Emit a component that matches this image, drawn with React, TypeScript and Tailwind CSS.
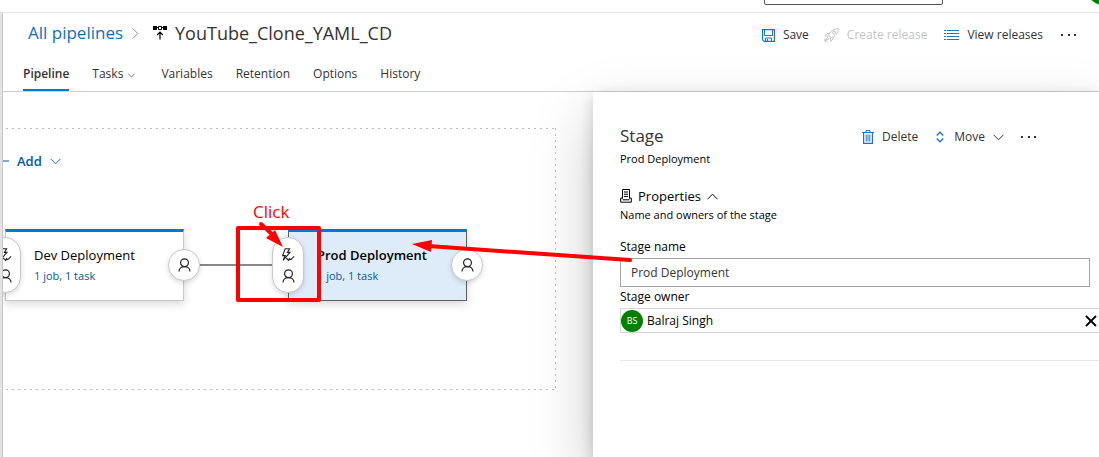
import type { ReactNode, SVGProps } from "react";

function Icon({ children, ...rest }: { children: ReactNode } & SVGProps<SVGSVGElement>) {
  return (
    <svg fill="none" stroke="currentColor" aria-hidden="true" {...rest}>
      {children}
    </svg>
  );
}

const Person = () => (
  <Icon width="13" height="14" viewBox="0 0 13 14" strokeWidth="1.2">
    <circle cx="6.5" cy="4.7" r="3.9" />
    <path d="M1 13.5C1 10.5 3.4 8.6 6.5 8.6S12 10.5 12 13.5" />
  </Icon>
);

const BoltCheck = () => (
  <Icon width="14" height="14" viewBox="0 0 14 14" strokeWidth="1.1">
    <path d="M4.2.8H8.6L6.4 4.4H9L2 12.4 4.2 7.6H1.6Z" />
    <path d="M5.2 10 7.6 12.4 9.2 10.6M8 10.2 9.8 11.6 13.2 8.4" />
  </Icon>
);

const Chevron = ({ className }: { className?: string }) => (
  <Icon width="11" height="7" viewBox="0 0 11 7" className={className}>
    <path d="M.5.8 5.5 5.8 10.5.8" />
  </Icon>
);

const Dots = () => (
  <Icon width="16" height="4" viewBox="0 0 16 4" stroke="none" fill="currentColor">
    <rect x="0" y="1" width="2" height="2" />
    <rect x="7" y="1" width="2" height="2" />
    <rect x="13" y="1" width="2" height="2" />
  </Icon>
);

const ReleaseIcon = () => (
  <Icon width="14" height="14" viewBox="0 0 14 14" className="text-black">
    <path d="M0 0H4V4H0ZM10 0H14V4H10Z" fill="currentColor" stroke="none" />
    <path d="M5.5.5H8.5V3.5H5.5ZM4 1.5H5M9 1.5H10" />
    <path d="M7 13.5V6.5M4.2 9 7 6.2 9.8 9" strokeWidth="1.2" />
  </Icon>
);

const SaveIcon = () => (
  <Icon width="13" height="13" viewBox="0 0 13 13" className="text-[#1874cd]">
    <path d="M.6.6H12.4V12.4H2.2L.6 10.8Z" strokeWidth="1.2" />
    <path d="M2.5.5V6.5H10.5V.5M3.5 12.4V9H9.5V12.4M5.5 10V12" />
  </Icon>
);

const RocketIcon = () => (
  <Icon width="15" height="14" viewBox="0 0 15 14">
    <path d="M4.5 7.2C6 3.5 9.5.8 14.3.6 14.2 5 11.2 8.3 7.3 9.8Z" />
    <circle cx="10" cy="4.6" r="1.4" />
    <path d="M5.3 5.5H3L.8 8H4.3M9 9.2V11L6.5 13.3V9.8M4.2 8.6 1 12.9 5.5 10.3M1 10.5V13.3H3.5" />
  </Icon>
);

const ListIcon = () => (
  <Icon width="15" height="12" viewBox="0 0 15 12" className="text-[#1874cd]">
    <path d="M3 1.5H15M3 4.5H15M3 7.5H15M3 10.5H15M0 1.5H2M0 4.5H2M0 7.5H2M0 10.5H2" />
  </Icon>
);

const TrashIcon = () => (
  <Icon width="12" height="14" viewBox="0 0 12 14" className="text-[#1874cd]">
    <path d="M0 2.5H12M4 2.5V.6H8V2.5" />
    <path d="M1.6 2.5V13.4H10.4V2.5" strokeWidth="1.2" />
    <path d="M4.2 4.5V11.5M6 4.5V11.5M7.8 4.5V11.5" />
  </Icon>
);

const MoveIcon = () => (
  <Icon width="8" height="12" viewBox="0 0 8 12" strokeWidth="1.3" className="text-[#1874cd]">
    <path d="M.7 4.5 4 1.2 7.3 4.5M.7 7.5 4 10.8 7.3 7.5" />
  </Icon>
);

const PropertiesIcon = () => (
  <Icon width="12" height="14" viewBox="0 0 12 14">
    <path d="M2.5 9.5V.5H9.5V9.5M4 3H8M4 5.2H8M4 7.4H8" />
    <path d="M2.6 9H.7V13.2H11.3V9H9.4M2.6 10.8H9.4" />
  </Icon>
);

function Stage({ name, place, selected }: { name: string; place: string; selected?: boolean }) {
  return (
    <div
      className={`absolute top-[137px] h-[72px] w-[179px] border border-t-[3px] border-t-[#0078d4] shadow-[0_3px_8px_rgba(0,0,0,0.16)] ${place} ${
        selected ? "border-[#605e5c] bg-[#deecf9]" : "border-[#c8c8c8] bg-white"
      }`}
    >
      <div className="pt-[13px] pl-7">
        <div className={`text-[13px] leading-5 text-black ${selected ? "font-semibold" : ""}`}>{name}</div>
        <a href="#tasks" className="block text-[11px] leading-[22px] text-[#005a9e]">
          1 job, 1 task
        </a>
      </div>
      <button
        aria-label="Pre-deployment conditions"
        className="absolute top-[5px] -left-[17px] flex h-14 w-8 flex-col items-center justify-center gap-[7px] rounded-full border border-[#c8c8c8] bg-white text-[#222] shadow-[0_2px_5px_rgba(0,0,0,0.15)]"
      >
        <BoltCheck />
        <Person />
      </button>
      <button
        aria-label="Post-deployment conditions"
        className="absolute top-[17px] -right-[17px] flex size-8 items-center justify-center rounded-full border border-[#c8c8c8] bg-white text-[#222] shadow-[0_2px_5px_rgba(0,0,0,0.15)]"
      >
        <Person />
      </button>
    </div>
  );
}

function Annotations() {
  return (
    <div className="pointer-events-none absolute top-0 left-0 text-[#ff0000]">
      <svg width="660" height="320" viewBox="0 0 660 320" fill="none" stroke="currentColor" strokeWidth="4">
        <rect x="238" y="228" width="81" height="72" strokeLinejoin="round" />
        <path d="M261 224 273 235" strokeLinecap="round" />
        <path d="M283 247 266 238 275 230Z" fill="currentColor" stroke="none" />
        <path d="M630 260 428 246" strokeLinecap="round" />
        <path d="M412 244 432 240 431 252Z" fill="currentColor" stroke="none" />
      </svg>
      <span className="absolute top-[200px] left-[253px] text-[17px] leading-6">Click</span>
    </div>
  );
}

export default function App() {
  return (
    <div className="relative flex min-h-screen flex-col overflow-hidden bg-white font-['Open_Sans','Noto_Sans',sans-serif] text-[#333]">
      <div className="flex h-[13px] justify-end overflow-hidden border-b border-[#e5e5e5]">
        <input aria-label="Search" className="-mt-[23px] mr-36 h-7 w-[179px] shrink-0 rounded-xs border border-[#555]" />
        <div className="-mt-[27px] -mr-5 size-8 shrink-0 rounded-full bg-[#008000]" />
      </div>
      <div className="flex flex-1">
        <div className="w-[3px] shrink-0 border-r border-[#c8c8c8] bg-[#e4e4e4]" />
        <div className="flex min-w-0 flex-1 flex-col">
          <header className="border-b border-[#d0d0d0]">
            <div className="flex h-11 items-center justify-between pr-[22px] pl-[25px]">
              <div className="flex items-center pb-1">
                <a href="#pipelines" className="text-[17px] leading-7 text-[#106ebe]">All pipelines</a>
                <Chevron className="ml-[7px] -rotate-90 text-[#888]" />
                <span className="mr-2 ml-3"><ReleaseIcon /></span>
                <h1 className="text-lg leading-7 text-[#333]">YouTube_Clone_YAML_CD</h1>
              </div>
              <div className="flex items-center text-xs">
                <button className="flex items-center gap-2"><SaveIcon />Save</button>
                <button disabled className="ml-[15px] flex items-center gap-2 text-[#c4c4c4]"><RocketIcon />Create release</button>
                <button className="ml-[17px] flex items-center gap-2"><ListIcon />View releases</button>
                <button aria-label="More actions" className="ml-[18px]"><Dots /></button>
              </div>
            </div>
            <nav className="flex gap-[23px] pl-5 text-xs">
              <a href="#pipeline" className="h-[34px] border-b-2 border-[#0078d4] pt-[9px] font-semibold">Pipeline</a>
              <a href="#tasks" className="flex gap-[5px] pt-[9px] pr-[3px]">Tasks<Chevron className="mt-[6px] w-[7px]" /></a>
              <a href="#variables" className="pt-[9px]">Variables</a>
              <a href="#retention" className="pt-[9px]">Retention</a>
              <a href="#options" className="pt-[9px]">Options</a>
              <a href="#history" className="pt-[9px]">History</a>
            </nav>
          </header>
          <main className="flex flex-1">
            <section aria-label="Stages" className="relative min-w-0 flex-1 overflow-hidden">
              <svg className="absolute top-9 left-[3px] text-[#bdbdbd]" width="551" height="263" fill="none" stroke="currentColor" strokeDasharray="2 4" aria-hidden="true">
                <path d="M0 .5H550M549.5 0V262M0 261.5H550" />
              </svg>
              <button className="absolute top-[59px] left-0 flex items-center gap-2 text-[13px] leading-5 font-semibold text-[#005a9e]">
                <Icon width="6" height="2" viewBox="0 0 6 2"><path d="M0 1H6" /></Icon>
                Add
                <Chevron className="text-[#106ebe]" />
              </button>
              <div className="absolute top-[172px] left-[181px] h-[2px] w-[104px] bg-[#888]" />
              <Stage name="Dev Deployment" place="left-[2px]" />
              <Stage name="Prod Deployment" place="left-[285px]" selected />
            </section>
            <aside className="w-[506px] shrink-0 bg-white pt-8 pl-[27px] shadow-[0_26px_58px_rgba(0,0,0,0.22),0_5px_14px_rgba(0,0,0,0.18)]">
              <div className="flex items-center justify-between pr-[62px]">
                <h2 className="text-[17px] leading-6">Stage</h2>
                <div className="flex items-center pt-[2px] text-xs">
                  <button className="flex items-center gap-2"><TrashIcon />Delete</button>
                  <button className="ml-[18px] flex items-center gap-2"><MoveIcon /><span className="ml-[2px]">Move</span><Chevron /></button>
                  <button aria-label="More stage actions" className="ml-[17px]"><Dots /></button>
                </div>
              </div>
              <p className="text-[11px] leading-[22px] text-black">Prod Deployment</p>
              <button className="mt-4 flex items-center gap-[6px] text-[13px] leading-5 text-black">
                <PropertiesIcon />
                Properties
                <Chevron className="rotate-180" />
              </button>
              <p className="text-[11px] leading-[18px] text-black">Name and owners of the stage</p>
              <label htmlFor="stage-name" className="mt-[13px] block text-xs leading-5 text-black">Stage name</label>
              <input
                id="stage-name"
                defaultValue="Prod Deployment"
                className="mt-[1px] block h-[29px] w-[470px] border border-[#a6a6a6] px-[10px] text-xs text-[#333]"
              />
              <label htmlFor="stage-owner" className="block text-xs leading-5 text-black">Stage owner</label>
              <div className="mt-[1px] flex h-[25px] items-center border border-r-0 border-[#d6d6d6] pr-[2px]">
                <span className="flex size-[22px] shrink-0 items-center justify-center rounded-full bg-[#008000] text-[9px] text-white">BS</span>
                <input id="stage-owner" defaultValue="Balraj Singh" className="min-w-0 flex-1 px-1 text-xs text-black" />
                <button aria-label="Remove owner">
                  <Icon width="12" height="12" viewBox="0 0 12 12" strokeWidth="1.8" className="text-black">
                    <path d="M1 1 11 11M11 1 1 11" />
                  </Icon>
                </button>
              </div>
              <hr className="mt-[27px] border-[#e8e8e8]" />
            </aside>
          </main>
        </div>
      </div>
      <Annotations />
    </div>
  );
}
